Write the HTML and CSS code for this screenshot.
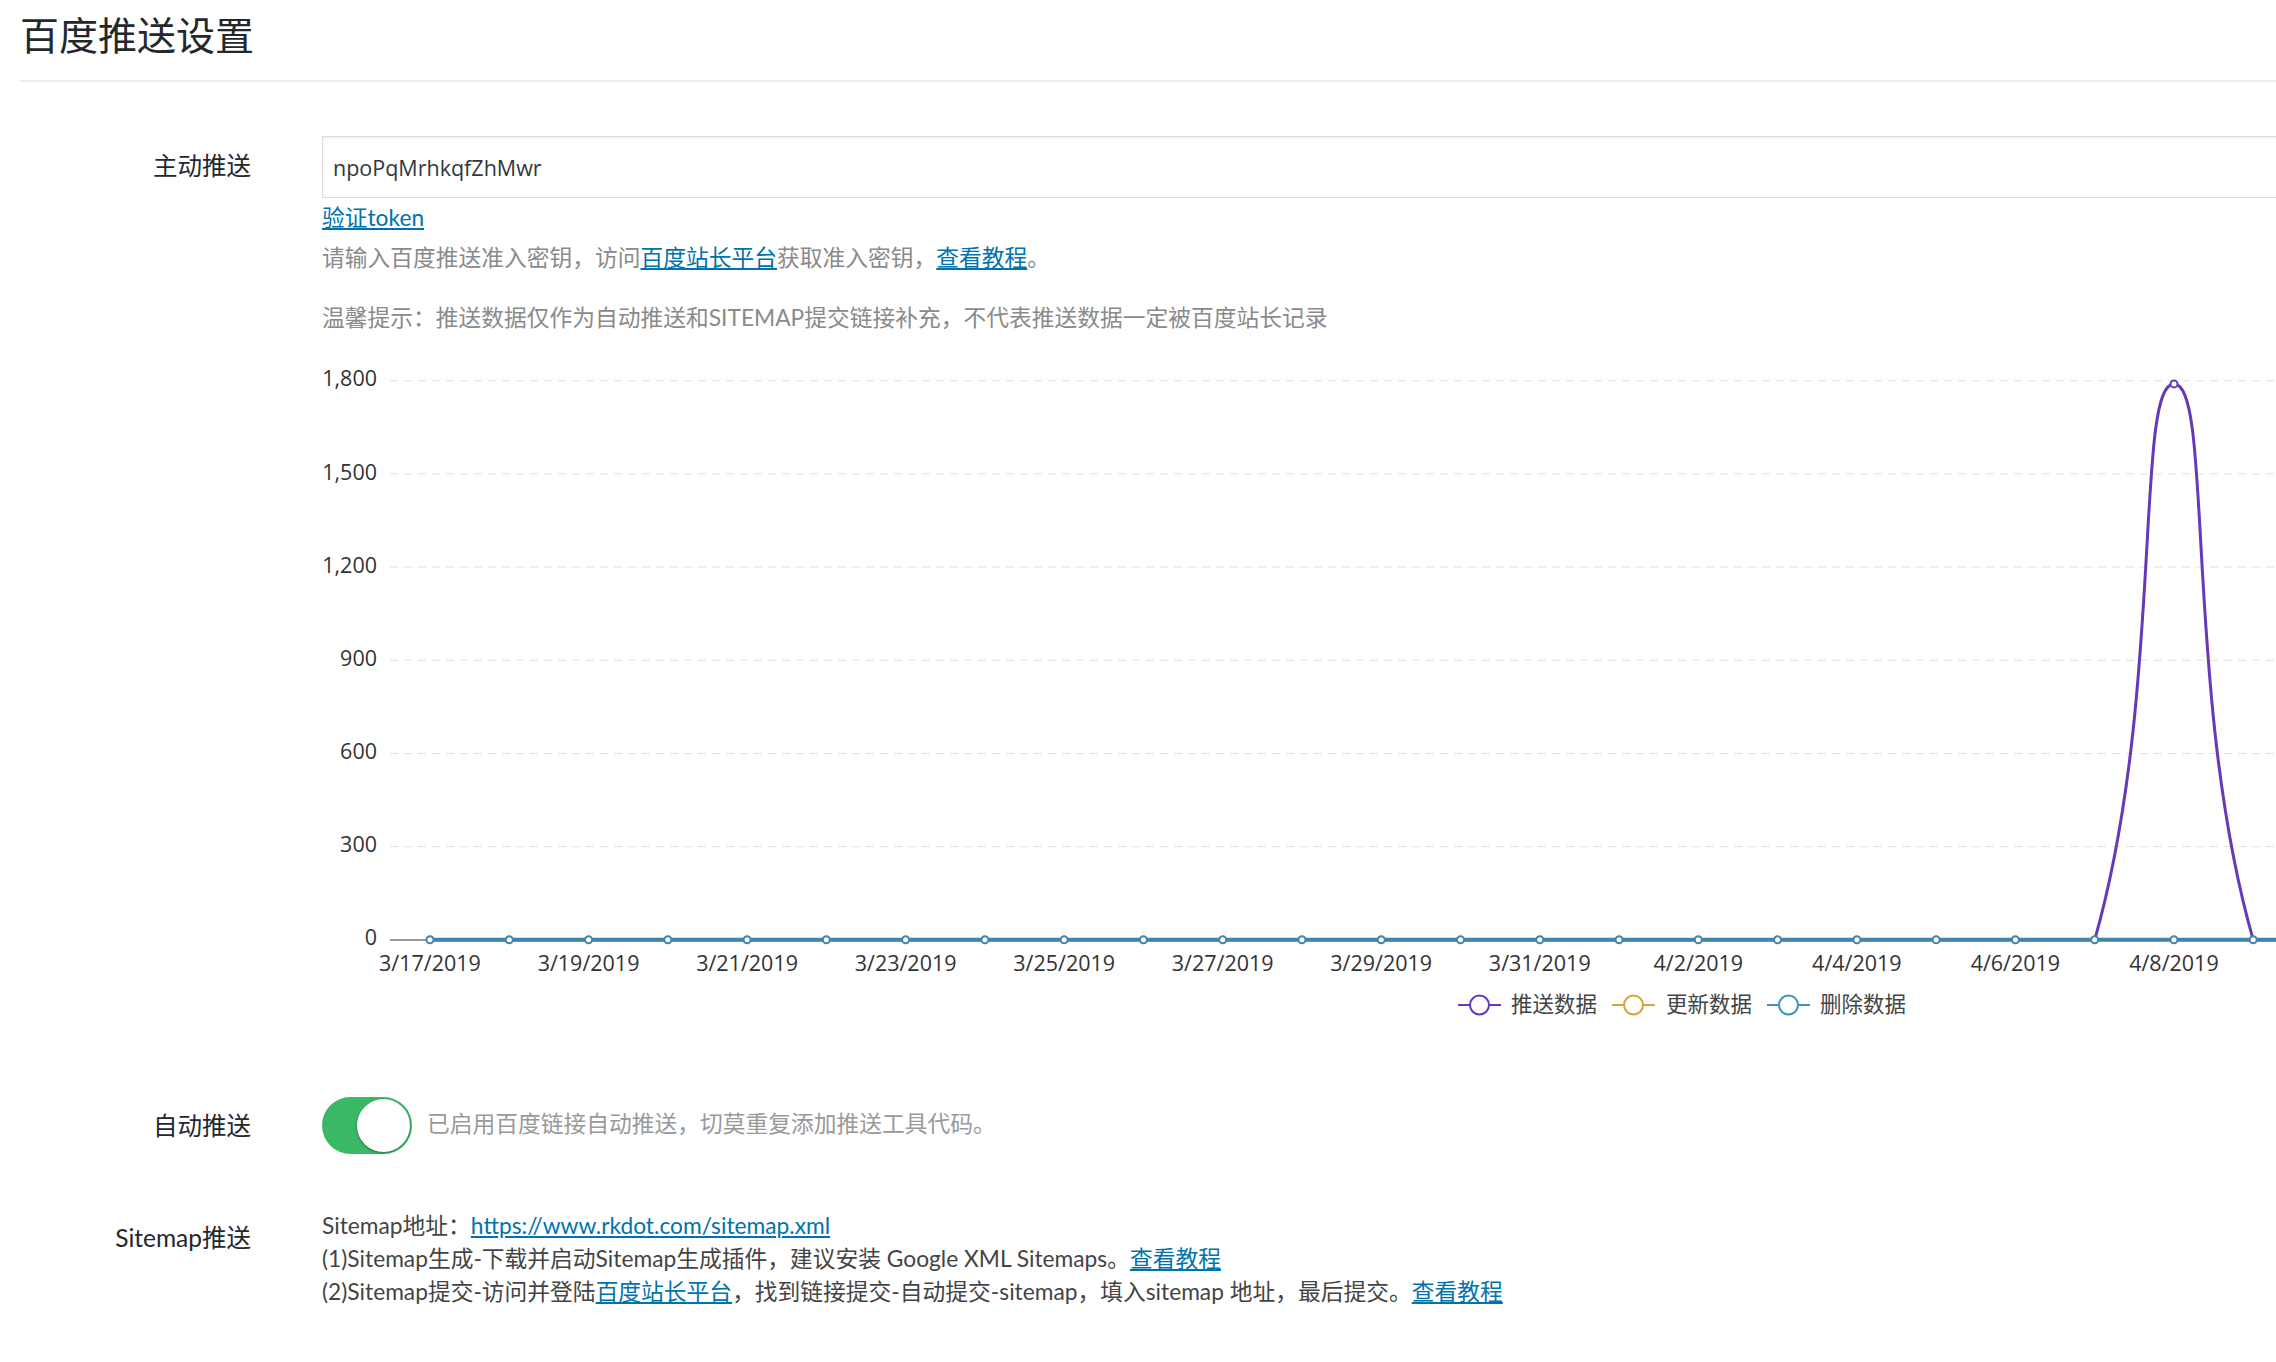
FILE: index.html
```html
<!DOCTYPE html>
<html lang="zh-CN">
<head>
<meta charset="utf-8">
<title>百度推送设置</title>
<link rel="stylesheet" href="styles.css">
</head>
<body>
<div class="wrap">
  <h1 class="page-title">百度推送设置</h1>
  <div class="form">
    <div class="row row-active">
      <div class="label label-active">主动推送</div>
      <div class="field">
        <input class="token-input" type="text" value="npoPqMrhkqfZhMwr">
        <p class="line token-line"><a class="link" href="#">验证token</a></p>
        <p class="line desc">请输入百度推送准入密钥，访问<a class="link" href="#">百度站长平台</a>获取准入密钥，<a class="link" href="#">查看教程</a>。</p>
        <p class="line tip">温馨提示：推送数据仅作为自动推送和SITEMAP提交链接补充，不代表推送数据一定被百度站长记录</p>
        <svg class="chart" viewBox="0 0 2000 680" width="2000" height="680" xmlns="http://www.w3.org/2000/svg">
          <g class="grid">
            <line x1="68" y1="30.8" x2="2000" y2="30.8"/>
            <line x1="68" y1="124" x2="2000" y2="124"/>
            <line x1="68" y1="217.1" x2="2000" y2="217.1"/>
            <line x1="68" y1="310.3" x2="2000" y2="310.3"/>
            <line x1="68" y1="403.5" x2="2000" y2="403.5"/>
            <line x1="68" y1="496.6" x2="2000" y2="496.6"/>
          </g>
          <g class="ylabels">
            <text x="55" y="27.8">1,800</text>
            <text x="55" y="121">1,500</text>
            <text x="55" y="214.1">1,200</text>
            <text x="55" y="307.3">900</text>
            <text x="55" y="400.5">600</text>
            <text x="55" y="493.6">300</text>
            <text x="55" y="586.8">0</text>
          </g>
          <line class="axis" x1="68" y1="590" x2="2000" y2="590"/>
          <path class="s-push" d="M108,589.8 H1772.7 C1842.2,346.2 1812.4,33.9 1852,33.9 C1891.6,33.9 1861.5,346.2 1931.2,589.8 H2010"/>
          <circle class="pt-push" cx="1852" cy="33.9" r="3.5"/>
          <path class="s-update" d="M108,589.8 H2010"/>
          <path class="s-delete" d="M108,589.8 H2010"/>
          <g class="pt-delete">
            <circle cx="108" cy="589.8" r="3.5"/>
            <circle cx="187.27" cy="589.8" r="3.5"/>
            <circle cx="266.54" cy="589.8" r="3.5"/>
            <circle cx="345.81" cy="589.8" r="3.5"/>
            <circle cx="425.08" cy="589.8" r="3.5"/>
            <circle cx="504.35" cy="589.8" r="3.5"/>
            <circle cx="583.62" cy="589.8" r="3.5"/>
            <circle cx="662.89" cy="589.8" r="3.5"/>
            <circle cx="742.16" cy="589.8" r="3.5"/>
            <circle cx="821.43" cy="589.8" r="3.5"/>
            <circle cx="900.7" cy="589.8" r="3.5"/>
            <circle cx="979.97" cy="589.8" r="3.5"/>
            <circle cx="1059.24" cy="589.8" r="3.5"/>
            <circle cx="1138.51" cy="589.8" r="3.5"/>
            <circle cx="1217.78" cy="589.8" r="3.5"/>
            <circle cx="1297.05" cy="589.8" r="3.5"/>
            <circle cx="1376.32" cy="589.8" r="3.5"/>
            <circle cx="1455.59" cy="589.8" r="3.5"/>
            <circle cx="1534.86" cy="589.8" r="3.5"/>
            <circle cx="1614.13" cy="589.8" r="3.5"/>
            <circle cx="1693.4" cy="589.8" r="3.5"/>
            <circle cx="1772.67" cy="589.8" r="3.5"/>
            <circle cx="1851.94" cy="589.8" r="3.5"/>
            <circle cx="1931.21" cy="589.8" r="3.5"/>
            <circle cx="2010.48" cy="589.8" r="3.5"/>
          </g>
          <g class="xlabels">
            <text x="108" y="612">3/17/2019</text>
            <text x="266.54" y="612">3/19/2019</text>
            <text x="425.08" y="612">3/21/2019</text>
            <text x="583.62" y="612">3/23/2019</text>
            <text x="742.16" y="612">3/25/2019</text>
            <text x="900.7" y="612">3/27/2019</text>
            <text x="1059.24" y="612">3/29/2019</text>
            <text x="1217.78" y="612">3/31/2019</text>
            <text x="1376.32" y="612">4/2/2019</text>
            <text x="1534.86" y="612">4/4/2019</text>
            <text x="1693.4" y="612">4/6/2019</text>
            <text x="1851.94" y="612">4/8/2019</text>
          </g>
          <g class="legend">
            <g class="lg-push">
              <line x1="1136" y1="655" x2="1179" y2="655"/>
              <circle cx="1157.5" cy="655" r="9.5"/>
              <text x="1189" y="653">推送数据</text>
            </g>
            <g class="lg-update">
              <line x1="1290" y1="655" x2="1333" y2="655"/>
              <circle cx="1311.5" cy="655" r="9.5"/>
              <text x="1344" y="653">更新数据</text>
            </g>
            <g class="lg-delete">
              <line x1="1445" y1="655" x2="1488" y2="655"/>
              <circle cx="1466.5" cy="655" r="9.5"/>
              <text x="1498" y="653">删除数据</text>
            </g>
          </g>
        </svg>
      </div>
    </div>
    <div class="row row-auto">
      <div class="label label-auto">自动推送</div>
      <div class="field field-auto">
        <span class="switch"><span class="knob"></span></span>
        <span class="switch-text">已启用百度链接自动推送，切莫重复添加推送工具代码。</span>
      </div>
    </div>
    <div class="row row-sitemap">
      <div class="label label-sitemap">Sitemap推送</div>
      <div class="field">
        <p class="sm-line">Sitemap地址：<a class="link" href="#">https://www.rkdot.com/sitemap.xml</a></p>
        <p class="sm-line">(1)Sitemap生成-下载并启动Sitemap生成插件，建议安装 Google XML Sitemaps。<a class="link" href="#">查看教程</a></p>
        <p class="sm-line">(2)Sitemap提交-访问并登陆<a class="link" href="#">百度站长平台</a>，找到链接提交-自动提交-sitemap，填入sitemap 地址，最后提交。<a class="link" href="#">查看教程</a></p>
      </div>
    </div>
  </div>
</div>
</body>
</html>
```

FILE: styles.css
```css
html {
  overflow: hidden;
}

body {
  margin: 0;
  background: #fff;
  font-family: Lato, "Noto Sans CJK SC", sans-serif;
  color: #32373c;
}

.wrap {
  width: 2600px;
}

.page-title {
  margin: 0 0 0 20px;
  padding: 10px 0 20px 0;
  font-size: 39px;
  font-weight: 400;
  line-height: 50px;
  color: #23282d;
  border-bottom: 2px solid #ececec;
}

.row {
  display: flex;
  align-items: flex-start;
}

.label {
  flex: none;
  width: 251px;
  margin-right: 71px;
  text-align: right;
  font-size: 24.5px;
  color: #23282d;
}

.field {
  flex: none;
  width: 2200px;
}

.row-active {
  margin-top: 54px;
}

.label-active {
  line-height: 60px;
}

.token-input {
  display: block;
  box-sizing: border-box;
  width: 100%;
  height: 62px;
  margin: 0;
  padding: 0 10px;
  border: 1px solid #dcdcdc;
  box-shadow: inset 0 1px 3px rgba(0, 0, 0, 0.08);
  font-family: "Open Sans", sans-serif;
  font-size: 21.5px;
  color: #32373c;
  background: #fff;
  outline: none;
}

.line {
  margin: 0;
  font-size: 22.75px;
  line-height: 34px;
}

.token-line {
  margin-top: 3px;
}

.desc {
  margin-top: 6px;
  color: #8a8a8a;
}

.tip {
  margin-top: 26px;
  color: #8a8a8a;
}

.link {
  color: #0073aa;
  text-decoration: underline;
}

.chart {
  display: block;
  margin-top: 15px;
  overflow: visible;
  font-family: "Open Sans", "Noto Sans CJK SC", sans-serif;
}

.chart text {
  font-size: 21.5px;
  fill: #333;
  dominant-baseline: central;
}

.grid line {
  stroke: #e1e1e1;
  stroke-width: 1;
  stroke-dasharray: 8 6;
}

.ylabels text {
  text-anchor: end;
}

.xlabels text {
  text-anchor: middle;
}

.axis {
  stroke: #333;
  stroke-width: 1.2;
}

.s-push,
.s-update,
.s-delete {
  fill: none;
  stroke-linejoin: round;
}

.s-push {
  stroke: #6539b8;
  stroke-width: 3;
}

.s-update {
  stroke: #d3a53c;
  stroke-width: 3;
}

.s-delete {
  stroke: #4284b0;
  stroke-width: 4;
}

.pt-push {
  fill: #fff;
  stroke: #6539b8;
  stroke-width: 2;
}

.pt-delete circle {
  fill: #fff;
  stroke: #4284b0;
  stroke-width: 2;
}

.legend line {
  stroke-width: 2;
}

.legend circle {
  fill: #fff;
  stroke-width: 2;
}

.lg-push line,
.lg-push circle {
  stroke: #6539b8;
}

.lg-update line,
.lg-update circle {
  stroke: #d3a53c;
}

.lg-delete line,
.lg-delete circle {
  stroke: #3f93c4;
}

.legend text {
  fill: #444;
}

.row-auto {
  margin-top: 67px;
  align-items: center;
}

.label-auto {
  line-height: 57px;
}

.field-auto {
  display: flex;
  align-items: center;
  gap: 15px;
}

.switch {
  flex: none;
  box-sizing: border-box;
  width: 90px;
  height: 57px;
  padding: 2px;
  border-radius: 29px;
  background: #3ab866;
  display: flex;
  justify-content: flex-end;
  align-items: center;
}

.knob {
  width: 53px;
  height: 53px;
  border-radius: 50%;
  background: #fff;
  box-shadow: 0 1px 3px rgba(0, 0, 0, 0.35);
}

.switch-text {
  font-size: 22.75px;
  line-height: 34px;
  color: #999;
  margin-bottom: 4px;
}

.row-sitemap {
  margin-top: 55px;
}

.label-sitemap {
  line-height: 33px;
  padding-top: 12px;
}

.sm-line {
  margin: 0;
  font-size: 22.75px;
  line-height: 33px;
  color: #444;
}
```
